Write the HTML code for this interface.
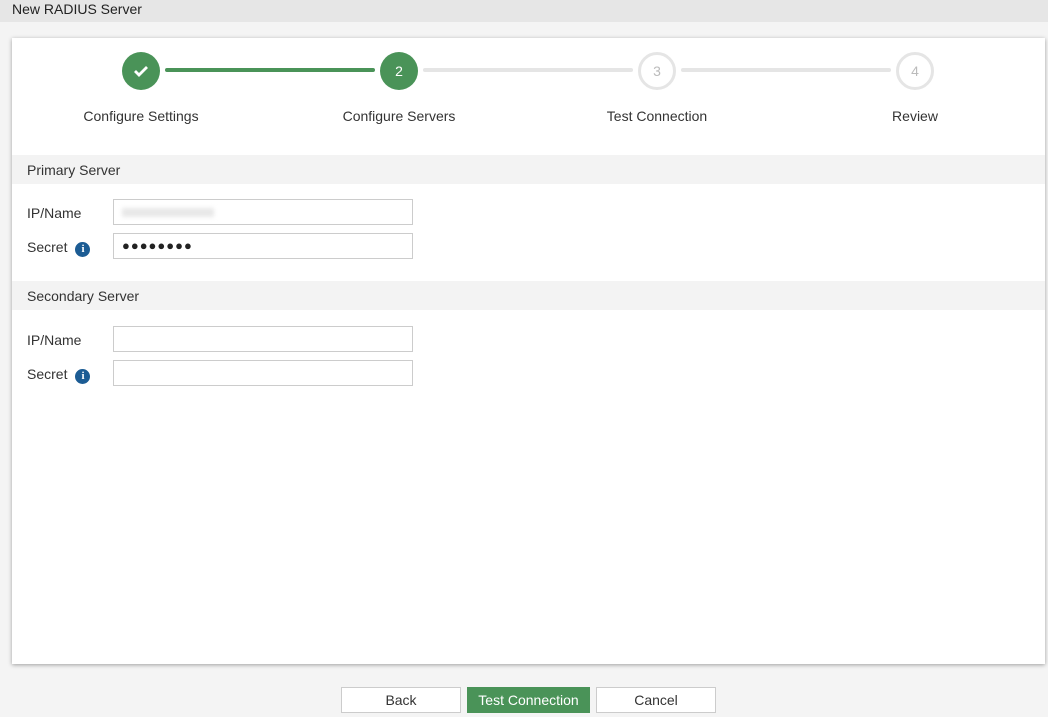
<!DOCTYPE html>
<html><head><style>
body{margin:0;width:1048px;height:717px;background:#f4f4f4;font-family:"Liberation Sans",sans-serif;color:#333;position:relative;overflow:hidden;font-size:14px}
.abs{position:absolute}
.hdr{left:0;top:0;width:1048px;height:22px;background:#e6e6e6;}
.hdr span{position:absolute;left:12px;top:1px;font-size:14px;color:#222}
.card{left:12px;top:38px;width:1033px;height:626px;background:#fff;box-shadow:0 1px 4px rgba(0,0,0,.35)}
.c{width:38px;height:38px;border-radius:50%;box-sizing:border-box;text-align:center;line-height:38px;font-size:14px}
.g{background:#4a9358;color:#fff}
.w{background:#fff;border:3px solid #e5e5e5;color:#bbb;line-height:32px}
.ln{height:4px;border-radius:2px}
.lbl{font-size:14px;color:#333;text-align:center;width:200px}
.sec{left:12px;width:1033px;height:29px;background:#f3f3f3;}
.sec span{position:absolute;left:15px;top:7px;font-size:14px}
.in{left:113px;width:300px;height:26px;box-sizing:border-box;border:1px solid #ccc;background:#fff}
.fl{left:27px;font-size:14px}
.i{display:inline-block;width:15px;height:15px;border-radius:50%;background:#1c5c94;color:#fff;font:bold 11px/15px "Liberation Serif",serif;text-align:center;margin-left:8px;vertical-align:0}
.b{top:687px;height:26px;box-sizing:border-box;border:1px solid #ccc;background:#fff;text-align:center;line-height:25px;font-size:14px}
</style></head><body>
<div class="abs hdr"><span>New RADIUS Server</span></div>
<div class="abs card"></div>
<div class="abs ln" style="left:165px;top:68px;width:210px;background:#4a9358"></div>
<div class="abs ln" style="left:423px;top:68px;width:210px;background:#e5e5e5"></div>
<div class="abs ln" style="left:681px;top:68px;width:210px;background:#e5e5e5"></div>
<div class="abs c g" style="left:122px;top:52px"><svg width="16" height="14" viewBox="0 0 16 14" style="vertical-align:-2px"><path d="M2 7l4 4 8-8" stroke="#fff" stroke-width="2.8" fill="none"/></svg></div>
<div class="abs c g" style="left:380px;top:52px">2</div>
<div class="abs c w" style="left:638px;top:52px">3</div>
<div class="abs c w" style="left:896px;top:52px">4</div>
<div class="abs lbl" style="left:41px;top:108px">Configure Settings</div>
<div class="abs lbl" style="left:299px;top:108px">Configure Servers</div>
<div class="abs lbl" style="left:557px;top:108px">Test Connection</div>
<div class="abs lbl" style="left:815px;top:108px">Review</div>
<div class="abs sec" style="top:155px"><span>Primary Server</span></div>
<div class="abs fl" style="top:205px">IP/Name</div>
<div class="abs in" style="top:199px"><div style="position:absolute;left:8px;top:8px;width:92px;height:9px;background:#e8e8e8;filter:blur(2px)"></div></div>
<div class="abs fl" style="top:239px">Secret<span class="i">i</span></div>
<div class="abs in" style="top:233px;font-size:13px;padding-left:8px;line-height:23px;letter-spacing:1px;color:#222">●●●●●●●●</div>
<div class="abs sec" style="top:281px"><span>Secondary Server</span></div>
<div class="abs fl" style="top:332px">IP/Name</div>
<div class="abs in" style="top:326px"></div>
<div class="abs fl" style="top:366px">Secret<span class="i">i</span></div>
<div class="abs in" style="top:360px"></div>
<div class="abs b" style="left:341px;width:120px">Back</div>
<div class="abs b" style="left:467px;width:123px;background:#4a9358;border-color:#4a9358;color:#fff">Test Connection</div>
<div class="abs b" style="left:596px;width:120px">Cancel</div>
</body></html>
